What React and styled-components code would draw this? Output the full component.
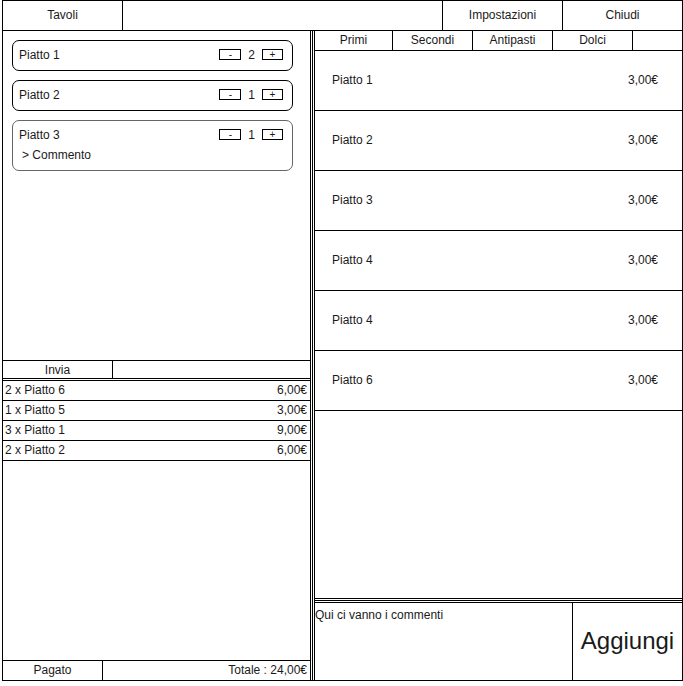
import React from 'react';
import styled, { createGlobalStyle } from 'styled-components';

const Global = createGlobalStyle`
body{
  margin:0;
  background:#fff;
  font-family:"Liberation Sans", Arial, sans-serif;
  font-size:12px;
  color:#1a1a1a;
}
*{box-sizing:border-box;}
`

const Frame = styled.div`
width:681px;
height:681px;
margin-left:2px;
border:1px solid #000;
display:flex;
flex-direction:column;
`

const TopBar = styled.div`
height:30px;
display:flex;
border-bottom:1px solid #000;
`

const TopCell = styled.div`
width:${p => p.w ? p.w + 'px' : 'auto'};
flex:${p => p.w ? 'none' : '1'};
display:flex;
align-items:center;
justify-content:center;
padding-bottom:2px;
border-left:${p => p.left ? '1px solid #000' : 'none'};
border-right:${p => p.right ? '1px solid #000' : 'none'};
`

const Main = styled.div`
flex:1;
display:flex;
min-height:0;
`

const LeftPanel = styled.div`
width:308px;
border-right:1px solid #000;
display:flex;
flex-direction:column;
`

const Divider = styled.div`
width:4px;
border-right:1px solid #000;
background:linear-gradient(to right, transparent 1px, #000 1px, #000 2px, transparent 2px);
`

const RightPanel = styled.div`
flex:1;
display:flex;
flex-direction:column;
`

const CardArea = styled.div`
height:330px;
border-bottom:1px solid #000;
padding:9px 0 0 9px;
display:flex;
flex-direction:column;
gap:9px;
`

const Card = styled.div`
width:281px;
height:${p => p.tall ? 51 : 31}px;
border:1px solid ${p => p.muted ? '#666' : '#000'};
border-radius:7px;
padding:4px 9px 0 6px;
`

const CardRow = styled.div`
height:19px;
display:flex;
align-items:center;
justify-content:space-between;
`

const Counter = styled.div`
display:flex;
align-items:center;
gap:7px;
`

const QtyButton = styled.span`
width:${p => p.w}px;
height:11px;
border:1px solid #000;
display:flex;
align-items:center;
justify-content:center;
font-size:10px;
line-height:1;
`

const Comment = styled.div`
height:20px;
display:flex;
align-items:center;
padding-left:3px;
padding-top:1px;
`

const InviaRow = styled.div`
height:20px;
display:flex;
border-bottom:3px double #000;
`

const Cell = styled.div`
width:${p => p.w}px;
border-right:1px solid #000;
display:flex;
align-items:center;
justify-content:center;
padding-bottom:${p => p.tight ? 0 : 1}px;
`

const OrderList = styled.div`
flex:1;
`

const OrderRow = styled.div`
height:20px;
border-bottom:1px solid #000;
display:flex;
align-items:center;
justify-content:space-between;
padding:0 3px 1px 2px;
`

const PagatoRow = styled.div`
height:20px;
border-top:1px solid #000;
display:flex;
`

const Totale = styled.div`
flex:1;
display:flex;
align-items:center;
justify-content:flex-end;
padding:0 3px 1px 0;
`

const TabBar = styled.div`
height:20px;
border-bottom:1px solid #000;
display:flex;
`

const Tab = styled.div`
width:${p => p.w}px;
border-right:1px solid #000;
display:flex;
align-items:center;
justify-content:center;
padding-bottom:1px;
`

const DishList = styled.div`
flex:1;
`

const DishRow = styled.div`
height:60px;
border-bottom:1px solid #000;
display:flex;
align-items:center;
justify-content:space-between;
padding:0 24px 1px 17px;
`

const HDivider = styled.div`
height:5px;
border-top:1px solid #000;
border-bottom:1px solid #000;
background:linear-gradient(to bottom, transparent 1px, #000 1px, #000 2px, transparent 2px);
`

const BottomArea = styled.div`
height:77px;
display:flex;
`

const CommentBox = styled.div`
flex:1;
padding-top:5px;
`

const AddButton = styled.div`
width:110px;
border-left:1px solid #000;
display:flex;
align-items:center;
justify-content:center;
font-size:24px;
padding-bottom:2px;
`

const cart = [
  { name: 'Piatto 1', qty: 2 },
  { name: 'Piatto 2', qty: 1 },
  { name: 'Piatto 3', qty: 1, comment: true },
];

const orders = [
  ['2 x Piatto 6', '6,00€'],
  ['1 x Piatto 5', '3,00€'],
  ['3 x Piatto 1', '9,00€'],
  ['2 x Piatto 2', '6,00€'],
];

const dishes = ['Piatto 1', 'Piatto 2', 'Piatto 3', 'Piatto 4', 'Piatto 4', 'Piatto 6'];

function App() {
  return (
    <>
      <Global />
      <Frame>
        <TopBar>
          <TopCell w={120} right>Tavoli</TopCell>
          <TopCell></TopCell>
          <TopCell w={120} left>Impostazioni</TopCell>
          <TopCell w={120} left>Chiudi</TopCell>
        </TopBar>
        <Main>
          <LeftPanel>
            <CardArea>
              {cart.map(c => (
                <Card key={c.name} muted={c.comment} tall={c.comment}>
                  <CardRow>
                    <span>{c.name}</span>
                    <Counter>
                      <QtyButton w={22}>-</QtyButton>
                      <span>{c.qty}</span>
                      <QtyButton w={21}>+</QtyButton>
                    </Counter>
                  </CardRow>
                  {c.comment && <Comment>&gt; Commento</Comment>}
                </Card>
              ))}
            </CardArea>
            <InviaRow>
              <Cell w={110} tight>Invia</Cell>
            </InviaRow>
            <OrderList>
              {orders.map(o => (
                <OrderRow key={o[0]}>
                  <span>{o[0]}</span>
                  <span>{o[1]}</span>
                </OrderRow>
              ))}
            </OrderList>
            <PagatoRow>
              <Cell w={100}>Pagato</Cell>
              <Totale>Totale : 24,00€</Totale>
            </PagatoRow>
          </LeftPanel>
          <Divider />
          <RightPanel>
            <TabBar>
              <Tab w={78}>Primi</Tab>
              <Tab w={80}>Secondi</Tab>
              <Tab w={80}>Antipasti</Tab>
              <Tab w={80}>Dolci</Tab>
            </TabBar>
            <DishList>
              {dishes.map((d, i) => (
                <DishRow key={i}>
                  <span>{d}</span>
                  <span>3,00€</span>
                </DishRow>
              ))}
            </DishList>
            <HDivider />
            <BottomArea>
              <CommentBox>Qui ci vanno i commenti</CommentBox>
              <AddButton>Aggiungi</AddButton>
            </BottomArea>
          </RightPanel>
        </Main>
      </Frame>
    </>
  );
}

export default App;
